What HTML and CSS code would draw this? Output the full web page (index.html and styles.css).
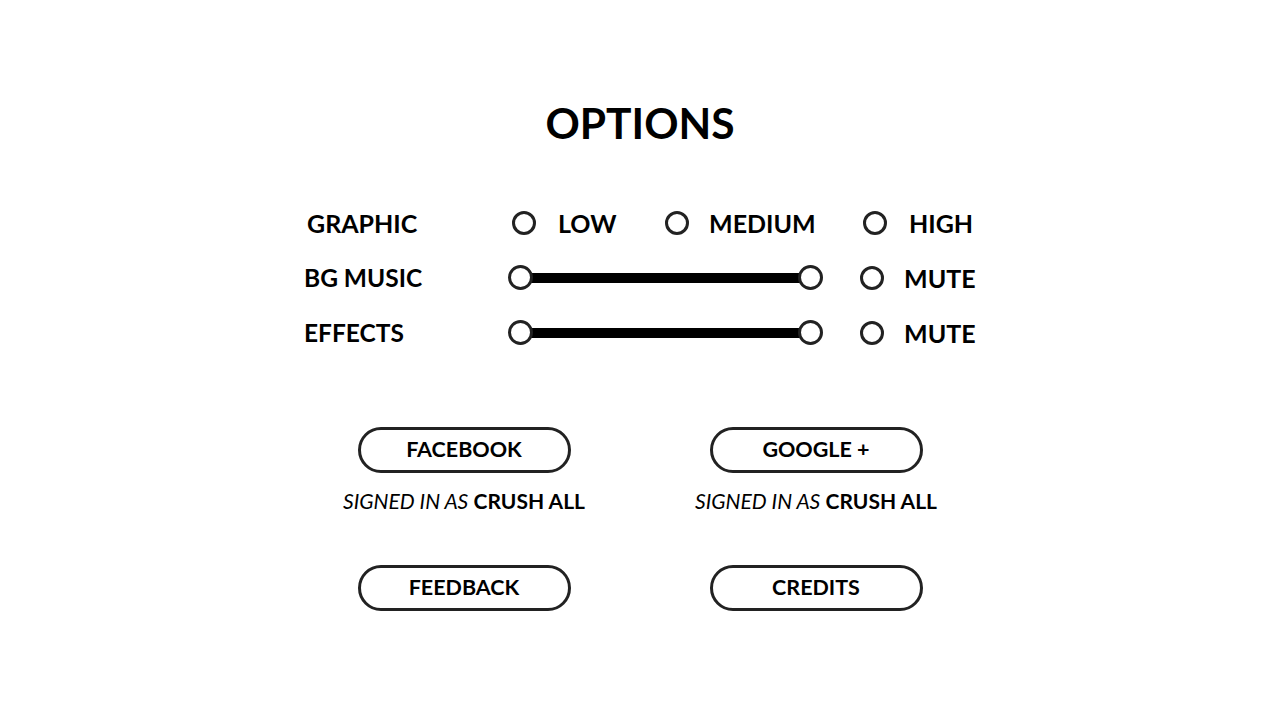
FILE: index.html
```html
<!DOCTYPE html>
<html lang="en">
<head>
    <meta charset="UTF-8">
    <meta name="viewport" content="width=device-width, initial-scale=1.0">
    <title>Options</title>
    <link rel="stylesheet" href="styles.css">
</head>
<body>

    <div class="screen">
        <h1 class="title">OPTIONS</h1>

        <div class="settings">
            <div class="label label-graphic">GRAPHIC</div>
            <div class="choices">
                <label class="choice choice-low"><span class="radio"></span><span class="choice-text">LOW</span></label>
                <label class="choice"><span class="radio"></span><span class="choice-text">MEDIUM</span></label>
            </div>
            <label class="choice choice-high"><span class="radio"></span><span class="choice-text">HIGH</span></label>

            <div class="label">BG MUSIC</div>
            <div class="slider">
                <span class="knob"></span>
                <span class="track"></span>
                <span class="knob"></span>
            </div>
            <label class="choice"><span class="radio"></span><span class="choice-text">MUTE</span></label>

            <div class="label">EFFECTS</div>
            <div class="slider">
                <span class="knob"></span>
                <span class="track"></span>
                <span class="knob"></span>
            </div>
            <label class="choice"><span class="radio"></span><span class="choice-text">MUTE</span></label>
        </div>

        <div class="accounts">
            <div class="account">
                <button class="pill">FACEBOOK</button>
                <p class="signed"><em>SIGNED IN AS</em> <strong>CRUSH ALL</strong></p>
            </div>
            <div class="account">
                <button class="pill">GOOGLE +</button>
                <p class="signed"><em>SIGNED IN AS</em> <strong>CRUSH ALL</strong></p>
            </div>
            <div class="account">
                <button class="pill">FEEDBACK</button>
            </div>
            <div class="account">
                <button class="pill">CREDITS</button>
            </div>
        </div>
    </div>

</body>
</html>
```

FILE: styles.css
```css
body {
    font-family: Lato, "Open Sans", sans-serif;
    background-color: #fff;
    color: #000;
    margin: 0;
    height: 100vh;
}

.screen {
    display: flex;
    flex-direction: column;
    align-items: center;
}

.title {
    font-size: 42.5px;
    font-weight: 700;
    line-height: 50px;
    margin: 98px 0 0 0;
}

.settings {
    display: grid;
    grid-template-columns: 206px 350px 116px;
    grid-auto-rows: 55px;
    align-items: center;
    margin-top: 47px;
}

.label {
    font-size: 24.5px;
    font-weight: 700;
}

.label-graphic {
    padding-left: 3px;
    font-size: 25px;
}

.choices {
    display: flex;
}

.choice {
    display: flex;
    align-items: center;
    font-size: 25px;
    font-weight: 700;
}

.choice-low {
    width: 153px;
    padding-left: 2px;
}

.choice-high {
    padding-left: 3px;
}

.radio {
    width: 18px;
    height: 18px;
    border: 3px solid #222;
    border-radius: 50%;
    margin-right: 20px;
}

.choice-low .radio,
.choice-high .radio {
    margin-right: 22px;
}

.slider {
    display: flex;
    align-items: center;
    width: 315px;
    margin-left: -2px;
}

.knob {
    position: relative;
    z-index: 1;
    width: 19px;
    height: 19px;
    border: 3px solid #222;
    border-radius: 50%;
    background-color: #fff;
}

.track {
    flex: 1;
    height: 10px;
    margin: 0 -12px;
    background-color: #000;
}

.accounts {
    display: grid;
    grid-template-columns: 352px 352px;
    margin-top: 67px;
    row-gap: 50px;
}

.account {
    display: flex;
    flex-direction: column;
    align-items: center;
}

.pill {
    width: 213px;
    height: 46px;
    border: 3px solid #222;
    border-radius: 23px;
    background-color: #fff;
    font-family: inherit;
    font-size: 21.5px;
    font-weight: 700;
    color: #000;
    padding: 0 0 3px 0;
}

.signed {
    margin: 14px 0 0 0;
    font-size: 21px;
    line-height: 28px;
}

.signed em {
    font-weight: 400;
}

.signed strong {
    font-weight: 700;
}
```
